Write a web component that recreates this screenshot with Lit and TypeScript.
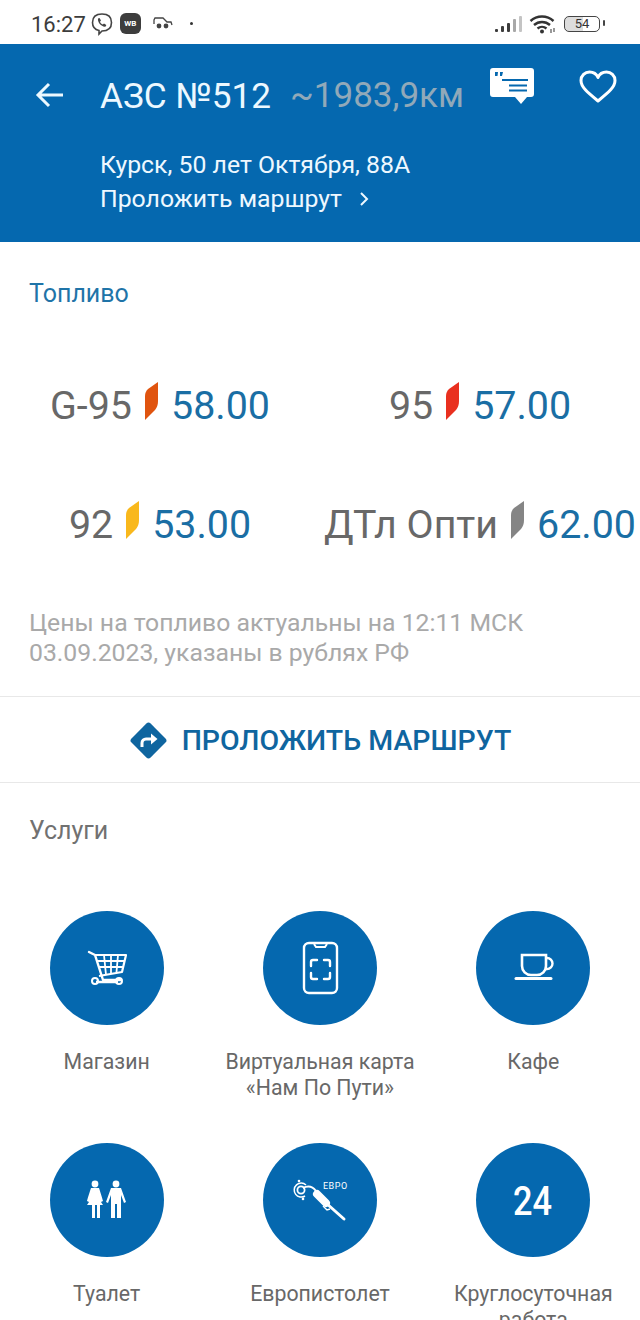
import { LitElement, html, css, svg } from "lit";
import { customElement } from "lit/decorators.js";

const fuels = [
  { name: "G-95", color: "#e0540f", price: "58.00" },
  { name: "95", color: "#e9301f", price: "57.00" },
  { name: "92", color: "#f9b81c", price: "53.00" },
  { name: "ДТл Опти", color: "#858585", price: "62.00" },
];

const services = [
  {
    label: "Магазин",
    icon: svg`<path d="M89 952l6 3 8 25h18" fill="none" stroke="#fff" stroke-width="2.4" stroke-linecap="round" stroke-linejoin="round"/>
      <path d="M95 955h31l-4 17-23 4" fill="none" stroke="#fff" stroke-width="2.2" stroke-linejoin="round"/>
      <path d="M97 961h28M98.500 967h25M104 955l2 20M111 955v19M118 955l-1.500 17" fill="none" stroke="#fff" stroke-width="1.800"/>
      <path d="M96 982h22" fill="none" stroke="#fff" stroke-width="2.400"/>
      <circle cx="95" cy="981" r="3" fill="none" stroke="#fff" stroke-width="2"/>
      <circle cx="119" cy="981" r="3" fill="none" stroke="#fff" stroke-width="2"/>`,
  },
  {
    label: "Виртуальная карта\n«Нам По Пути»",
    icon: svg`<rect x="304" y="943" width="33" height="50" rx="5" fill="none" stroke="#fff" stroke-width="2.400"/>
      <path d="M314 944l2 3h9l2-3" fill="none" stroke="#fff" stroke-width="2"/>
      <path d="M311 966v-4a2 2 0 0 1 2-2h4M324 960h4a2 2 0 0 1 2 2v4M330 973v4a2 2 0 0 1-2 2h-4M317 979h-4a2 2 0 0 1-2-2v-4" fill="none" stroke="#fff" stroke-width="2.400" stroke-linecap="round"/>`,
  },
  {
    label: "Кафе",
    icon: svg`<path d="M522 955h24v11a9 9 0 0 1-9 9h-6a9 9 0 0 1-9-9z" fill="none" stroke="#fff" stroke-width="2.600"/>
      <path d="M546 958h1a4.500 4.500 0 0 1 0 11h-2" fill="none" stroke="#fff" stroke-width="2.400"/>
      <path d="M516 978.500h35" stroke="#fff" stroke-width="3" stroke-linecap="round"/>`,
  },
  {
    label: "Туалет",
    icon: svg`<circle cx="95" cy="1184" r="3.400" fill="#fff"/><circle cx="116" cy="1184" r="3.400" fill="#fff"/>
      <path d="M91 1188h8c1 3 3 9 4 13l-2 1 2 3H87l2-3-2-1c1-4 3-10 4-13z" fill="#fff"/>
      <path d="M92 1204h3v14h-3zM97 1204h3v14h-3z" fill="#fff"/>
      <path d="M111 1188h10l5 14-2 1-3-8v23h-4v-14h-2v14h-4v-23l-3 8-2-1z" fill="#fff"/>`,
  },
  {
    label: "Европистолет",
    icon: svg`<circle cx="301" cy="1190" r="3.600" fill="none" stroke="#fff" stroke-width="1.800"/>
      <path d="M306 1185a7 7 0 1 0-1 11" fill="none" stroke="#fff" stroke-width="1.500"/>
      <circle cx="299" cy="1181" r="1.300" fill="#fff"/><circle cx="303" cy="1199" r="1.300" fill="#fff"/>
      <path d="M303 1188c6-3 10-1 13 3" fill="none" stroke="#fff" stroke-width="2"/>
      <path d="M317 1194l9 9" stroke="#fff" stroke-width="8" stroke-linecap="round"/>
      <path d="M326 1203l18 16" stroke="#fff" stroke-width="3" stroke-linecap="round"/>
      <path d="M323 1206l4 4 3-1" fill="none" stroke="#fff" stroke-width="1.400"/>
      <text x="323" y="1189" fill="#fff" font-family="Roboto, sans-serif" font-size="9" letter-spacing=".5">ЕВРО</text>`,
  },
  {
    label: "Круглосуточная\nработа",
    icon: svg`<text x="513" y="1215" fill="#fff" textLength="39" lengthAdjust="spacingAndGlyphs" font-family="Roboto, sans-serif" font-size="41" font-weight="500">24</text>`,
  },
];

// icon paths above are in page coordinates, so each circle gets its own viewBox
const origins = [
  [50, 911],
  [263, 911],
  [476, 911],
  [50, 1143],
  [263, 1143],
  [476, 1143],
];

@customElement("app-root")
export class AppRoot extends LitElement {
  static styles = css`
    :host {
      display: block;
      height: 1320px;
      overflow: hidden;
      background: #fff;
      font-family: Roboto, "Noto Sans", sans-serif;
    }
    .status {
      height: 44px;
      box-sizing: border-box;
      padding: 3px 40px 0 31px;
      display: flex;
      align-items: center;
      color: #3c3c3c;
    }
    .time {
      font-size: 22px;
      line-height: 44px;
      height: 41px;
      margin-right: 5px;
    }
    .status-left {
      display: flex;
      align-items: center;
      gap: 9px;
    }
    .viber {
      margin-left: -9px;
    }
    .spacer {
      flex: 1;
    }
    .wb {
      width: 21px;
      height: 21px;
      margin-left: -2px;
      border-radius: 6px;
      background: #3d3d3d;
      color: #fff;
      font-size: 8px;
      font-weight: 700;
      display: grid;
      place-items: center;
    }
    .car {
      margin-left: 3px;
    }
    .dot {
      width: 3px;
      height: 3px;
      border-radius: 50%;
      background: #333;
      margin-left: 8px;
    }
    .status-right {
      display: flex;
      align-items: center;
      gap: 6px;
    }
    .battery {
      width: 36px;
      height: 16px;
      box-sizing: border-box;
      border: 1.500px solid #444;
      border-radius: 5px;
      background: linear-gradient(90deg, #ddd 54%, #fff 54%);
      font-size: 13px;
      line-height: 14px;
      text-align: center;
      color: #333;
      margin-left: 2px;
      position: relative;
    }
    .battery::after {
      content: "";
      position: absolute;
      right: -6px;
      top: 3px;
      width: 2px;
      height: 6px;
      border-radius: 1px;
      background: #444;
    }
    .head {
      height: 198px;
      box-sizing: border-box;
      background: #0568af;
      color: #fff;
      padding: 24px 0 0 35px;
    }
    .head-top {
      display: flex;
      align-items: flex-start;
      height: 56px;
    }
    .back {
      margin-top: 12px;
      margin-right: 35px;
      flex: none;
    }
    .title {
      font-size: 35.200px;
      line-height: 56px;
      white-space: nowrap;
      color: #ecf8ff;
    }
    .dist {
      font-size: 35px;
      line-height: 56px;
      margin-left: 19px;
      color: #91a9b9;
      white-space: nowrap;
    }
    .chat {
      margin-left: 26px;
      flex: none;
    }
    .heart {
      margin-left: 45px;
      margin-top: 2px;
      flex: none;
    }
    .addr {
      margin: 24px 0 0 65px;
      font-size: 24.800px;
      line-height: 34px;
      color: #eef8ff;
      white-space: nowrap;
    }
    .route-link {
      display: flex;
      align-items: center;
      gap: 17px;
    }
    .section {
      font-size: 25px;
      line-height: 30px;
      padding: 37px 29px 0;
      color: #1f74a8;
    }
    .fuels {
      display: grid;
      grid-template-columns: 320px 320px;
      grid-auto-rows: 119px;
      margin-top: 37px;
    }
    .fuel {
      display: flex;
      justify-content: center;
      align-items: center;
      font-size: 39.400px;
      white-space: nowrap;
      color: #686868;
    }
    .leaf {
      margin: 0 12px 10px 12px;
      flex: none;
    }
    .price {
      color: #1a6ea4;
    }
    .note {
      margin: 24px 29px 0;
      font-size: 24.750px;
      line-height: 30px;
      color: #a9a9a9;
      white-space: nowrap;
    }
    .route-btn {
      margin-top: 28px;
      height: 87px;
      box-sizing: border-box;
      border-top: 1px solid #e8e8e8;
      border-bottom: 1px solid #e8e8e8;
      display: flex;
      align-items: center;
      justify-content: center;
      gap: 14px;
      padding-top: 2px;
      font-size: 28.500px;
      font-weight: 500;
      color: #0f659f;
      white-space: nowrap;
    }
    .services-title {
      font-size: 25px;
      line-height: 30px;
      padding: 33px 29px 0;
      color: #717171;
    }
    .services {
      display: grid;
      grid-template-columns: repeat(3, 1fr);
      grid-auto-rows: 232px;
      margin-top: 65px;
    }
    .service {
      display: flex;
      flex-direction: column;
      align-items: center;
      text-align: center;
    }
    .circle {
      width: 114px;
      height: 114px;
      border-radius: 50%;
      background: #0568af;
      flex: none;
      display: block;
    }
    .label {
      margin-top: 24px;
      font-size: 21.300px;
      line-height: 26px;
      color: #686868;
      white-space: pre-line;
    }
  `;

  render() {
    return html`
      <div class="status">
        <div class="status-left">
          <span class="time">16:27</span>
          <svg class="viber" width="22" height="24" viewBox="0 0 22 24">
            <path d="M11 2c6 0 9.500 3 9.500 8.500S17 19 11 19l-3 3v-3.500C3.500 17.500 1.500 15 1.500 10.500 1.500 5 5 2 11 2z" fill="none" stroke="#444" stroke-width="1.600"/>
            <path d="M7 6.500l1.500-.5 1.500 2.500-1 1.200c.5 1.300 1.500 2.300 2.800 2.800l1.200-1 2.300 1.500-.5 1.500c-3.800 1-8.500-4-7.800-8z" fill="#444"/>
          </svg>
          <span class="wb">WB</span>
          <svg class="car" width="20" height="14" viewBox="0 0 20 14">
            <path d="M1 7V3l1-2h8l4 4h4l1 3" fill="none" stroke="#444" stroke-width="1.300"/>
            <circle cx="6" cy="9" r="2.400" fill="#444"/><circle cx="13" cy="9" r="2.400" fill="#444"/>
          </svg>
          <span class="dot"></span>
        </div>
        <div class="spacer"></div>
        <div class="status-right">
          <svg width="28" height="18" viewBox="0 0 28 18">
            <rect x="0" y="14" width="3" height="3" rx="1" fill="#3c3c3c"/>
            <rect x="6" y="11" width="3" height="6" rx="1" fill="#3c3c3c"/>
            <rect x="12" y="8" width="3" height="9" rx="1" fill="#3c3c3c"/>
            <rect x="18" y="4" width="3" height="13" rx="1" fill="#a8a8a8"/>
            <rect x="24" y="1" width="3" height="16" rx="1" fill="#c4c4c4"/>
          </svg>
          <svg width="27" height="20" viewBox="0 0 27 20">
            <path d="M1.500 7a17 17 0 0 1 23 0M5 11a12 12 0 0 1 16 0M8.500 14.500a7 7 0 0 1 9 0" fill="none" stroke="#333" stroke-width="2.400"/>
            <circle cx="13" cy="17.500" r="2" fill="#333"/>
            <path d="M22 15v4M25 14v4" stroke="#555" stroke-width="1.200"/>
          </svg>
          <span class="battery">54</span>
        </div>
      </div>

      <div class="head">
        <div class="head-top">
          <svg class="back" width="30" height="30" viewBox="0 0 30 30">
            <path d="M28 15H3M14 4L3 15l11 11" fill="none" stroke="#ecf8ff" stroke-width="3"/>
          </svg>
          <span class="title">АЗС №512</span>
          <span class="dist">~1983,9км</span>
          <svg class="chat" width="44" height="36" viewBox="0 0 44 36">
            <path d="M3 0h38a3 3 0 0 1 3 3v23a3 3 0 0 1-3 3h-4l-6 7-6-7H3a3 3 0 0 1-3-3V3a3 3 0 0 1 3-3z" fill="#fff"/>
            <path d="M12 12h26M19 17.500h18M19 22.500h18" stroke="#0568af" stroke-width="2"/>
            <path d="M5 4h3l-.5 4H5zM10 4h3l-1 4h-2z" fill="#0568af"/>
          </svg>
          <svg class="heart" width="38" height="34" viewBox="0 0 38 34">
            <path d="M19 31C8 22 2 17 2 10.500 2 5.500 6 2 10.500 2 14 2 17.500 4 19 7.500 20.500 4 24 2 27.500 2 32 2 36 5.500 36 10.500 36 17 30 22 19 31z" fill="none" stroke="#fff" stroke-width="3" stroke-linejoin="round"/>
          </svg>
        </div>
        <div class="addr">
          <div>Курск, 50 лет Октября, 88А</div>
          <div class="route-link">
            Проложить маршрут
            <svg width="10" height="14" viewBox="0 0 10 14"><path d="M2 1l6 6-6 6" fill="none" stroke="#eef8ff" stroke-width="2"/></svg>
          </div>
        </div>
      </div>

      <div class="section">Топливо</div>
      <div class="fuels">
        ${fuels.map(
          (f) => html`<div class="fuel">
            <span>${f.name}</span>
            <svg class="leaf" width="15" height="40" viewBox="0 0 15 40">
              <path d="M14 1v19c0 4-1 6-3 9L1 39V15c0-3 1-5 3-7z" fill=${f.color} />
            </svg>
            <span class="price">${f.price}</span>
          </div>`
        )}
      </div>
      <div class="note">Цены на топливо актуальны на 12:11 МСК<br />03.09.2023, указаны в рублях РФ</div>

      <div class="route-btn">
        <svg width="39" height="39" viewBox="0 0 39 39">
          <rect x="6" y="6" width="27" height="27" rx="3" transform="rotate(45 19.500 19.500)" fill="#0f659f"/>
          <path d="M13 26v-4a4 4 0 0 1 4-4h8" fill="none" stroke="#fff" stroke-width="3"/>
          <path d="M22 12.500l6.500 5.500-6.500 5.500z" fill="#fff"/>
        </svg>
        <span>ПРОЛОЖИТЬ МАРШРУТ</span>
      </div>

      <div class="services-title">Услуги</div>
      <div class="services">
        ${services.map(
          (s, i) => html`<div class="service">
            <svg class="circle" viewBox="${origins[i][0]} ${origins[i][1]} 114 114">${s.icon}</svg>
            <div class="label">${s.label}</div>
          </div>`
        )}
      </div>
    `;
  }
}
